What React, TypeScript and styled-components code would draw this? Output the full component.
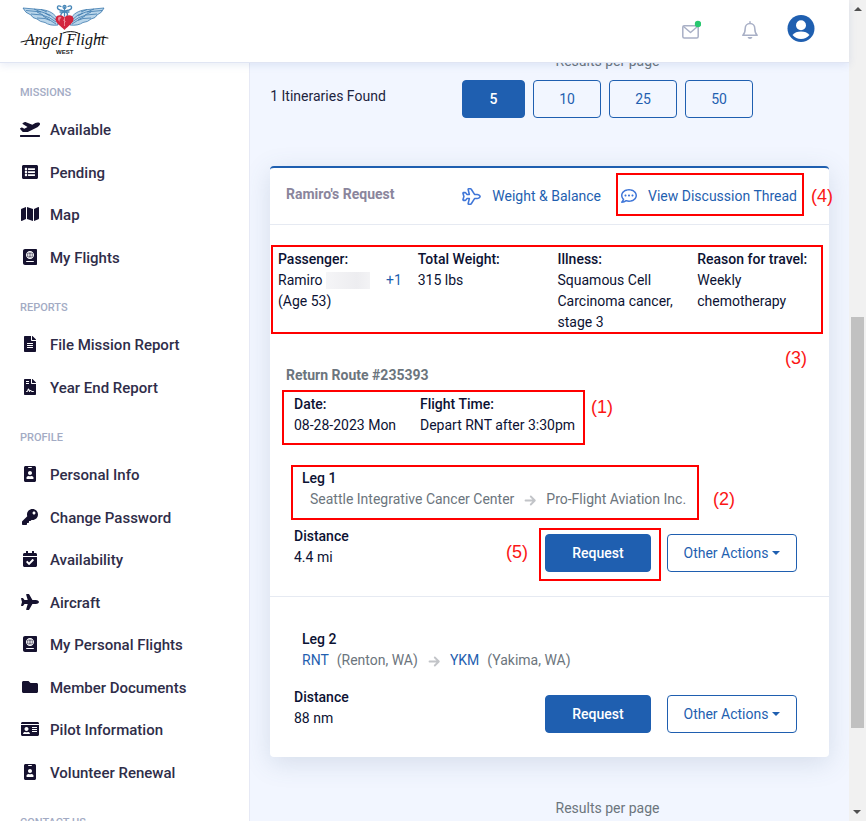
import React from "react";
import styled, { createGlobalStyle } from "styled-components";
import {
  FaCalendarCheck,
  FaFileAlt,
  FaFileContract,
  FaFolder,
  FaIdBadge,
  FaIdCard,
  FaKey,
  FaListAlt,
  FaMap,
  FaPassport,
  FaPlane,
  FaPlaneDeparture,
  FaRegCommentDots,
} from "react-icons/fa";
import type { IconType } from "react-icons";

const blue = "#1f5fb0";
const ink = "#0c1233";
const muted = "#6c757d";

const GlobalStyle = createGlobalStyle`
  *, *::before, *::after { box-sizing: border-box; }
  body {
    margin: 0;
    font-family: Roboto, "Liberation Sans", sans-serif;
    font-size: 14px;
    line-height: 21px;
    color: ${ink};
    background: #f2f6ff;
  }
  a { color: inherit; text-decoration: none; }
  button { font: inherit; cursor: pointer; }
  h1, h2, h3, p, ul, dl, dd { margin: 0; padding: 0; }
`;

const Window = styled.div`
  display: flex;
  height: 100vh;
  overflow: hidden;
`;

const Page = styled.div`
  flex: 1;
  min-width: 0;
  display: flex;
  flex-direction: column;
`;

const TopBar = styled.header`
  position: relative;
  z-index: 2;
  flex: none;
  display: flex;
  align-items: flex-start;
  justify-content: space-between;
  height: 63px;
  padding: 4px 34px 0 20px;
  background: #fff;
  border-bottom: 1px solid #e0e5f3;
  box-shadow: 0 2px 8px rgba(60, 90, 170, 0.12);
`;

const LogoLink = styled.a`
  display: block;
  svg { display: block; overflow: visible; }
`;

const Tools = styled.div`
  display: flex;
  align-items: center;
  height: 50px;
`;

const ToolButton = styled.button<{ $gap?: number }>`
  display: flex;
  padding: 0;
  margin-left: ${(p) => p.$gap ?? 0}px;
  border: 0;
  background: none;
  color: #a9b0c6;
`;

const Body = styled.div`
  flex: 1;
  min-height: 0;
  display: flex;
`;

const Sidebar = styled.nav`
  flex: none;
  width: 250px;
  padding-top: 1px;
  overflow: hidden;
  background: #fff;
  border-right: 1px solid #e6e9f5;
`;

const GroupTitle = styled.h2`
  padding: 18px 20px 6px;
  font-size: 11px;
  font-weight: 500;
  line-height: 21px;
  text-transform: uppercase;
  color: #a3abc4;
`;

const MenuList = styled.ul`
  display: grid;
  grid-auto-rows: 43px 42px;
  list-style: none;
`;

const MenuLink = styled.a`
  display: flex;
  align-items: center;
  gap: 10px;
  height: 100%;
  padding: 0 20px;
  font-size: 15px;
  font-weight: 500;
  color: #2f2d49;
`;

const MenuIcon = styled.span`
  display: flex;
  justify-content: center;
  width: 20px;
  padding-bottom: 3px;
  color: #15112e;
  svg { flex: none; display: block; }
`;

const Main = styled.main`
  flex: 1;
  min-width: 0;
  overflow: hidden;
  padding: 0 20px;
`;

const Scrolled = styled.div`
  margin-top: -12px;
`;

const ResultBar = styled.section`
  display: grid;
  grid-template-columns: 116px 1fr;
  margin-bottom: 48px;
  text-align: center;
  color: ${muted};
`;

const Found = styled.p`
  grid-row: 2;
  padding-top: 14px;
  white-space: nowrap;
  color: #1d2440;
`;

const PerPage = styled.p`
  grid-column: 2;
`;

const Sizes = styled.div`
  grid-column: 2;
  display: flex;
  justify-content: center;
  gap: 8px;
  padding-top: 8px;
`;

const Button = styled.button<{ $solid?: boolean; $width: number }>`
  display: inline-flex;
  align-items: center;
  justify-content: center;
  gap: 4px;
  width: ${(p) => p.$width}px;
  height: 38px;
  padding: 0 4px;
  border: 1px solid ${blue};
  border-radius: 4px;
  white-space: nowrap;
  font-weight: ${(p) => (p.$solid ? 500 : 400)};
  color: ${(p) => (p.$solid ? "#fff" : blue)};
  background: ${(p) => (p.$solid ? blue : "transparent")};
`;

const Caret = styled.span`
  border: 4px solid transparent;
  border-top-color: currentColor;
  border-bottom: 0;
`;

const Card = styled.article`
  margin-bottom: 41px;
  background: #fff;
  border-top: 2px solid ${blue};
  border-radius: 4px;
  box-shadow: 0 6px 26px rgba(70, 100, 130, 0.17);
`;

const CardHeader = styled.header`
  display: flex;
  align-items: center;
  justify-content: space-between;
  height: 57px;
  padding: 0 32px 0 16px;
  border-bottom: 1px solid #e6eaf2;
`;

const CardTitle = styled.h1`
  padding-bottom: 4px;
  font-size: 14px;
  font-weight: 700;
  color: #8a859c;
`;

const CardLinks = styled.div`
  display: flex;
  gap: 20px;
`;

const CardLink = styled.a`
  position: relative;
  display: flex;
  align-items: center;
  gap: 11px;
  white-space: nowrap;
  color: ${blue};
  svg { color: #3f76d8; }
`;

const Facts = styled.dl<{ $columns: string }>`
  position: relative;
  display: grid;
  grid-template-columns: ${(p) => p.$columns};
  dt { font-weight: 500; white-space: nowrap; }
`;

const Patient = styled(Facts)`
  margin: 24px -8px 0 8px;
  dd { padding-right: 16px; }
`;

const Schedule = styled(Facts)`
  margin: 8px 0 0 24px;
`;

const PersonName = styled.div`
  display: flex;
  align-items: center;
  gap: 3px;
  a { margin-left: auto; color: ${blue}; }
`;

const Redacted = styled.span`
  width: 44px;
  height: 17px;
  background: linear-gradient(90deg, #f5f5f7, #ededf0 70%, #f3f3f5);
`;

const RouteTitle = styled.h2`
  margin: 32px 0 0 16px;
  font-size: 14px;
  font-weight: 700;
  line-height: 21px;
  color: ${muted};
`;

const Leg = styled.section`
  padding: 32px 32px 24px 24px;
  & + & { border-top: 1px solid #e6eaf2; }
`;

const LegHead = styled.div`
  position: relative;
  margin-left: 8px;
`;

const LegTitle = styled.h3`
  font-size: 14px;
  font-weight: 500;
  line-height: 21px;
`;

const Route = styled.p`
  display: flex;
  align-items: center;
  gap: 10px;
  white-space: nowrap;
  color: ${muted};
`;

const Stop = styled.span<{ $indent?: boolean }>`
  display: flex;
  gap: 8px;
  padding-left: ${(p) => (p.$indent ? 8 : 0)}px;
  a { color: ${blue}; }
`;

const LegFoot = styled.div`
  display: flex;
  justify-content: space-between;
  margin-top: 16px;
`;

const Distance = styled.dl`
  dt { font-weight: 500; }
`;

const Actions = styled.div`
  display: flex;
  gap: 16px;
  padding-top: 8px;
`;

const Anchor = styled.span`
  position: relative;
  display: flex;
`;

/* Red call-out frame laid over the part it surrounds. */
const Frame = styled.span<{ $inset: string }>`
  position: absolute;
  inset: ${(p) => p.$inset};
  border: 2px solid #f00;
  pointer-events: none;
`;

const Note = styled.span<{ $inset: string }>`
  position: absolute;
  inset: ${(p) => p.$inset};
  font: 400 18px/22px "Liberation Sans", Arial, sans-serif;
  color: #fb1616;
  white-space: nowrap;
`;

const ScrollBar = styled.div`
  flex: none;
  display: flex;
  flex-direction: column;
  width: 17px;
  background: #f1f1f1;
`;

const ScrollArrow = styled.span<{ $down?: boolean }>`
  height: 17px;
  display: flex;
  align-items: center;
  justify-content: center;
  transform: ${(p) => (p.$down ? "rotate(180deg)" : "none")};
  &::before {
    content: "";
    border: 4px solid transparent;
    border-bottom-color: #505050;
    border-top: 0;
  }
`;

const ScrollTrack = styled.div`
  flex: 1;
  display: grid;
  grid-template-rows: 300fr 411fr 76fr;
  padding: 0 2px;
`;

const ScrollThumb = styled.span`
  grid-row: 2;
  background: #c1c1c1;
`;

const Logo = () => (
  <svg width="92" height="52" viewBox="0 0 92 52" role="img" aria-label="Angel Flight West">
    <g fill="#b9d5ea" stroke="#3b79ad" strokeWidth="0.8" strokeLinejoin="round">
      <path d="M37 14C33 8 27 6 20 5.500L3 4Q5 9 11 11Q12 14 17 15Q20 18 25 18.500Q30 22 38 21Z" />
      <path d="M51 14C55 8 61 6 68 5.500L84 4Q82 9 77 11Q76 14 71 15Q68 18 63 18.500Q58 22 50 21Z" />
    </g>
    <g fill="none" stroke="#3b79ad" strokeWidth="0.8">
      <path d="M6 6.500L22 8Q31 10 36 16M11 10L22 11Q30 13 36 18M17 14L25 14.500Q31 16 36 20M21 5.500L27 8M14 5L21 8M17 8L23 11M25 9L30 12M23 12L30 16" />
      <path d="M82 6.500L66 8Q57 10 52 16M77 10L66 11Q58 13 52 18M71 14L63 14.500Q57 16 52 20M67 5.500L61 8M74 5L67 8M71 8L65 11M63 9L58 12M65 12L58 16" />
    </g>
    <g fill="none" stroke="#4686b7" strokeWidth="1.300" strokeLinecap="round">
      <path d="M41 2.500C37 0 36 5 40 6C45 7 49 9 47 12M48 2.500C52 0 53 5 49 6C44 7 40 9 41 12" />
      <path d="M44.500 3V12M40 8H49" />
      <circle cx="44.500" cy="3" r="1.500" />
    </g>
    <path d="M44.500 26C41 22 35 19 35.500 14.500C36 10.500 42 10 44.500 13.500C47 10 53 10.500 53.500 14.500C54 19 48 22 44.500 26Z" fill="#d3263f" />
    <path d="M38 14Q39 12 41.500 13Q39 16 39.500 18Q37.500 16 38 14Z" fill="#ef8795" />
    <path d="M44.500 14V22M43 16Q47 17 44 19" fill="none" stroke="#f3a6af" strokeWidth="0.700" />
    <text x="5" y="41" fill="#111" fontFamily="'Liberation Serif', serif" fontStyle="italic" fontSize="16">
      Angel Flight
    </text>
    <path d="M1 38Q8 36 14 36M43 29Q51 26 58 29M76 34Q82 32 88 34" fill="none" stroke="#111" strokeWidth="1" strokeLinecap="round" />
    <text x="36" y="50" fill="#222" fontFamily="'Liberation Sans', sans-serif" fontWeight="700" fontSize="6">
      WEST
    </text>
  </svg>
);

const MailIcon = () => (
  <svg width="20" height="20" viewBox="0 0 20 20" fill="none" stroke="currentColor" strokeWidth="1.500" strokeLinejoin="round" strokeLinecap="round">
    <rect x="1.800" y="6.800" width="15.400" height="12.200" rx="1.500" />
    <path d="M2.500 7.500L9.500 13.500L16.500 7.500" />
    <circle cx="17" cy="5" r="3.200" fill="#28c76f" stroke="none" />
  </svg>
);

const BellIcon = () => (
  <svg width="18" height="20" viewBox="0 0 18 20" fill="none" stroke="currentColor" strokeWidth="1.500" strokeLinejoin="round" strokeLinecap="round">
    <path d="M9 4.500C6 4.500 4.200 7 4.200 9.500C4.200 13.200 3.800 14.400 1.800 16.200H16.200C14.200 14.400 13.800 13.200 13.800 9.500C13.800 7 12 4.500 9 4.500ZM9 2.800V4.500" />
    <path d="M6.500 18H11.500Q11 20 9 20Q7 20 6.500 18Z" fill="currentColor" stroke="none" />
  </svg>
);

const AvatarIcon = () => (
  <svg width="28" height="28" viewBox="0 0 28 28">
    <circle cx="14" cy="13.500" r="13.500" fill={blue} />
    <circle cx="14" cy="10.300" r="5" fill="#fff" />
    <path d="M5.500 19.900Q8.500 16.500 14 16.500Q19.500 16.500 22.500 19.900Q19 24 14 24Q9 24 5.500 19.900Z" fill="#fff" />
  </svg>
);

const PlaneOutline = () => (
  <svg width="19" height="17" viewBox="-28 -28 632 568" fill="none" stroke="currentColor" strokeWidth="52" strokeLinejoin="round">
    <path d="M480 186H390L280 14Q272 0 256 0H192Q172 2 176 22L216 186H134L96 134Q90 126 78 126H20Q-2 130 2 150L34 256L2 362Q-2 382 20 386H78Q90 386 96 378L134 326H216L176 490Q172 510 192 512H256Q272 512 280 498L390 326H480C515 326 576 292 576 256S515 186 480 186Z" />
  </svg>
);

const ArrowIcon = () => (
  <svg width="12" height="12" viewBox="0 0 12 12" fill="none" stroke="#c2c4c8" strokeWidth="1.800" strokeLinecap="round" strokeLinejoin="round">
    <path d="M1.500 6.500H10.500M6.800 2.500L10.800 6.500L6.800 10.500" />
  </svg>
);

const menu: { title: string; items: [string, IconType, number?][] }[] = [
  {
    title: "Missions",
    items: [
      ["Available", FaPlaneDeparture, 20],
      ["Pending", FaListAlt],
      ["Map", FaMap, 18],
      ["My Flights", FaPassport],
    ],
  },
  {
    title: "Reports",
    items: [
      ["File Mission Report", FaFileAlt],
      ["Year End Report", FaFileContract],
    ],
  },
  {
    title: "Profile",
    items: [
      ["Personal Info", FaIdBadge],
      ["Change Password", FaKey],
      ["Availability", FaCalendarCheck],
      ["Aircraft", FaPlane, 18],
      ["My Personal Flights", FaPassport],
      ["Member Documents", FaFolder],
      ["Pilot Information", FaIdCard, 18],
      ["Volunteer Renewal", FaIdBadge],
    ],
  },
  { title: "Contact Us", items: [] },
];

const LegActions = ({ distance, marked }: { distance: string; marked?: boolean }) => (
  <LegFoot>
    <Distance>
      <dt>Distance</dt>
      <dd>{distance}</dd>
    </Distance>
    <Actions>
      <Anchor>
        <Button $solid $width={106}>Request</Button>
        {marked && <Frame $inset="-6px -10px -9px -6px" />}
        {marked && <Note $inset="7px auto auto -39px">(5)</Note>}
      </Anchor>
      <Button $width={130} aria-haspopup="menu">
        Other Actions <Caret />
      </Button>
    </Actions>
  </LegFoot>
);

export default function App() {
  return (
    <Window>
      <GlobalStyle />
      <Page>
        <TopBar>
          <LogoLink href="#home"><Logo /></LogoLink>
          <Tools>
            <ToolButton aria-label="Messages"><MailIcon /></ToolButton>
            <ToolButton aria-label="Notifications" $gap={40}><BellIcon /></ToolButton>
            <ToolButton aria-label="Account" $gap={28}><AvatarIcon /></ToolButton>
          </Tools>
        </TopBar>
        <Body>
          <Sidebar>
            {menu.map((group) => (
              <React.Fragment key={group.title}>
                <GroupTitle>{group.title}</GroupTitle>
                <MenuList>
                  {group.items.map(([label, Icon, size]) => (
                    <li key={label}>
                      <MenuLink href="#menu">
                        <MenuIcon><Icon size={size ?? 16} /></MenuIcon>
                        {label}
                      </MenuLink>
                    </li>
                  ))}
                </MenuList>
              </React.Fragment>
            ))}
          </Sidebar>
          <Main>
            <Scrolled>
              <ResultBar>
                <PerPage>Results per page</PerPage>
                <Found>1 Itineraries Found</Found>
                <Sizes>
                  <Button $solid $width={63}>5</Button>
                  <Button $width={68}>10</Button>
                  <Button $width={68}>25</Button>
                  <Button $width={68}>50</Button>
                </Sizes>
              </ResultBar>
              <Card>
                <CardHeader>
                  <CardTitle>Ramiro's Request</CardTitle>
                  <CardLinks>
                    <CardLink href="#balance"><PlaneOutline />Weight &amp; Balance</CardLink>
                    <CardLink href="#thread">
                      <FaRegCommentDots size={16} />
                      View Discussion Thread
                      <Frame $inset="-13px -7px -9px -5px" />
                      <Note $inset="-1px auto auto calc(100% + 14px)">(4)</Note>
                    </CardLink>
                  </CardLinks>
                </CardHeader>
                <Patient $columns="repeat(4, 1fr)">
                  <div>
                    <dt>Passenger:</dt>
                    <dd>
                      <PersonName>Ramiro <Redacted /><a href="#companion">+1</a></PersonName>
                      (Age 53)
                    </dd>
                  </div>
                  <div>
                    <dt>Total Weight:</dt>
                    <dd>315 lbs</dd>
                  </div>
                  <div>
                    <dt>Illness:</dt>
                    <dd>Squamous Cell Carcinoma cancer, stage 3</dd>
                  </div>
                  <div>
                    <dt>Reason for travel:</dt>
                    <dd>Weekly chemotherapy</dd>
                  </div>
                  <Frame $inset="-4px 14px -1px -7px" />
                  <Note $inset="calc(100% + 14px) 30px auto auto">(3)</Note>
                </Patient>
                <RouteTitle>Return Route #235393</RouteTitle>
                <Schedule $columns="126px 1fr">
                  <div>
                    <dt>Date:</dt>
                    <dd>08-28-2023 Mon</dd>
                  </div>
                  <div>
                    <dt>Flight Time:</dt>
                    <dd>Depart RNT after 3:30pm</dd>
                  </div>
                  <Frame $inset="-4px 244px -9px -12px" />
                  <Note $inset="2px auto auto 297px">(1)</Note>
                </Schedule>
                <Leg>
                  <LegHead>
                    <LegTitle>Leg 1</LegTitle>
                    <Route>
                      <Stop $indent>Seattle Integrative Cancer Center</Stop>
                      <ArrowIcon />
                      <Stop>Pro-Flight Aviation Inc.</Stop>
                    </Route>
                    <Frame $inset="-3px 98px -10px -11px" />
                    <Note $inset="20px auto auto 411px">(2)</Note>
                  </LegHead>
                  <LegActions distance="4.4 mi" marked />
                </Leg>
                <Leg>
                  <LegHead>
                    <LegTitle>Leg 2</LegTitle>
                    <Route>
                      <Stop><a href="#rnt">RNT</a>(Renton, WA)</Stop>
                      <ArrowIcon />
                      <Stop><a href="#ykm">YKM</a>(Yakima, WA)</Stop>
                    </Route>
                  </LegHead>
                  <LegActions distance="88 nm" />
                </Leg>
              </Card>
              <ResultBar>
                <PerPage>Results per page</PerPage>
              </ResultBar>
            </Scrolled>
          </Main>
        </Body>
      </Page>
      <ScrollBar aria-hidden="true">
        <ScrollArrow />
        <ScrollTrack><ScrollThumb /></ScrollTrack>
        <ScrollArrow $down />
      </ScrollBar>
    </Window>
  );
}
